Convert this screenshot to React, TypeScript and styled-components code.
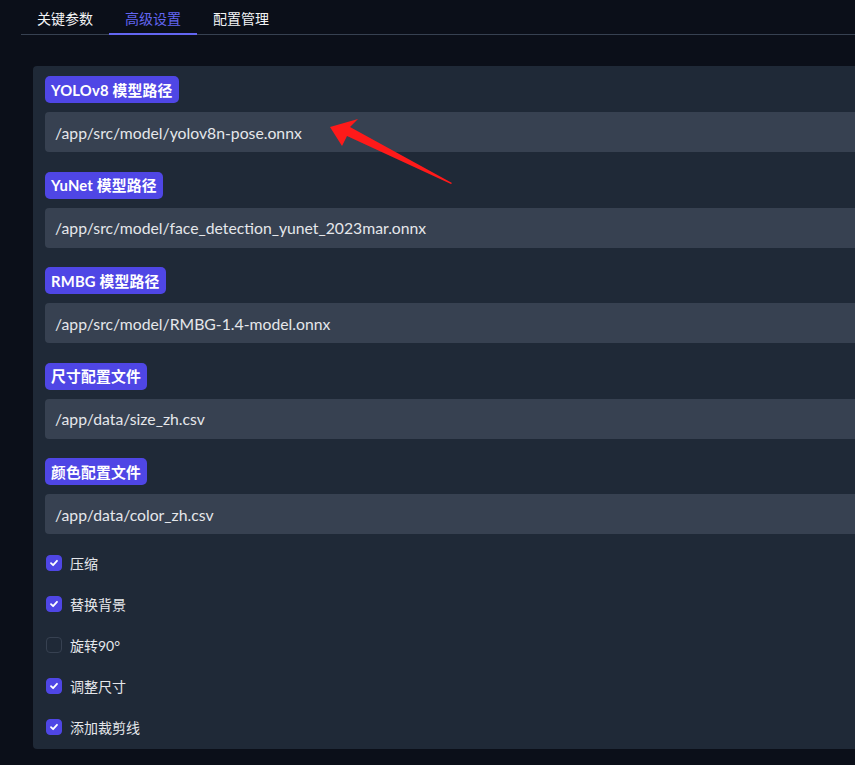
import React from "react";
import styled, { createGlobalStyle } from "styled-components";

const Global = createGlobalStyle`
  html, body { margin: 0; padding: 0; background: #0b0f19; overflow: hidden; }
  body { font-family: "Lato", "Noto Sans CJK SC", sans-serif; color: #e5e7eb; }
  * { box-sizing: border-box; }
`;

const Page = styled.div`
  position: relative;
  width: 1000px;
  height: 765px;
  padding-left: 21px;
`;

const TabBar = styled.div`
  display: flex;
  height: 35px;
  border-bottom: 1px solid #374151;
`;

const Tab = styled.div<{ $active?: boolean }>`
  padding: 3px 16px 0 16px;
  height: 35px;
  display: flex;
  align-items: center;
  font-size: 14px;
  font-family: "Noto Sans CJK SC", sans-serif;
  color: ${(p) => (p.$active ? "#6366f1" : "#f3f4f6")};
  border-bottom: 2px solid ${(p) => (p.$active ? "#6366f1" : "transparent")};
  margin-bottom: -1px;
`;

const Panel = styled.div`
  margin-top: 31px;
  margin-left: 12px;
  background: #1f2937;
  border-radius: 4px;
  padding: 10px 12px 12px 12px;
  display: flex;
  flex-direction: column;
`;

const Fields = styled.div`
  display: flex;
  flex-direction: column;
  gap: 19.5px;
`;

const Field = styled.div`
  display: flex;
  flex-direction: column;
  align-items: flex-start;
  gap: 9px;
`;

const Badge = styled.span`
  height: 27px;
  display: inline-flex;
  align-items: center;
  padding: 0 6px 1px 6px;
  border-radius: 5px;
  background: #4f46e5;
  color: #ffffff;
  font-weight: 700;
  font-size: 14.8px;
  letter-spacing: 0.2px;
  font-family: "Lato", "Noto Sans CJK SC", sans-serif;
`;

const Input = styled.div`
  width: 100%;
  height: 40px;
  background: #374151;
  border-radius: 4px;
  display: flex;
  align-items: center;
  padding: 0 10px;
  font-size: 15.75px;
  color: #e5e7eb;
`;

const Checks = styled.div`
  margin-top: 18px;
  display: flex;
  flex-direction: column;
  gap: 20px;
`;

const CheckRow = styled.label`
  display: flex;
  align-items: center;
  gap: 8px;
  height: 21px;
  padding-left: 1px;
  font-size: 14px;
  font-family: "Lato", "Noto Sans CJK SC", sans-serif;
  color: #e5e7eb;
`;

const Box = styled.span<{ $checked: boolean }>`
  width: 16px;
  height: 16px;
  border-radius: 4px;
  display: inline-flex;
  align-items: center;
  justify-content: center;
  background: ${(p) => (p.$checked ? "#4f46e5" : "#1f2937")};
  border: 1px solid ${(p) => (p.$checked ? "#4f46e5" : "#374151")};
`;

const Arrow = styled.svg`
  position: absolute;
  left: 320px;
  top: 115px;
`;

const fields = [
  ["YOLOv8 模型路径", "/app/src/model/yolov8n-pose.onnx"],
  ["YuNet 模型路径", "/app/src/model/face_detection_yunet_2023mar.onnx"],
  ["RMBG 模型路径", "/app/src/model/RMBG-1.4-model.onnx"],
  ["尺寸配置文件", "/app/data/size_zh.csv"],
  ["颜色配置文件", "/app/data/color_zh.csv"],
];

const checks: [string, boolean][] = [
  ["压缩", true],
  ["替换背景", true],
  ["旋转90°", false],
  ["调整尺寸", true],
  ["添加裁剪线", true],
];

export default function App() {
  return (
    <>
      <Global />
      <Page>
        <TabBar>
          <Tab>关键参数</Tab>
          <Tab $active>高级设置</Tab>
          <Tab>配置管理</Tab>
        </TabBar>
        <Panel>
          <Fields>
            {fields.map(([l, v]) => (
              <Field key={l}>
                <Badge>{l}</Badge>
                <Input>{v}</Input>
              </Field>
            ))}
          </Fields>
          <Checks>
            {checks.map(([l, c]) => (
              <CheckRow key={l}>
                <Box $checked={c}>
                  {c && (
                    <svg width="10" height="10" viewBox="0 0 10 10">
                      <path d="M2 5.2 L4.1 7.2 L8 2.8" stroke="#fff" strokeWidth="1.8" fill="none" strokeLinecap="round" strokeLinejoin="round" />
                    </svg>
                  )}
                </Box>
                {l}
              </CheckRow>
            ))}
          </Checks>
        </Panel>
        <Arrow width="140" height="75" viewBox="0 0 140 75">
          <path d="M10 12 L38 4 L30 12 L132 68 L131 69 L27 21 L22 31 Z" fill="#ff1a1a" />
        </Arrow>
      </Page>
    </>
  );
}
